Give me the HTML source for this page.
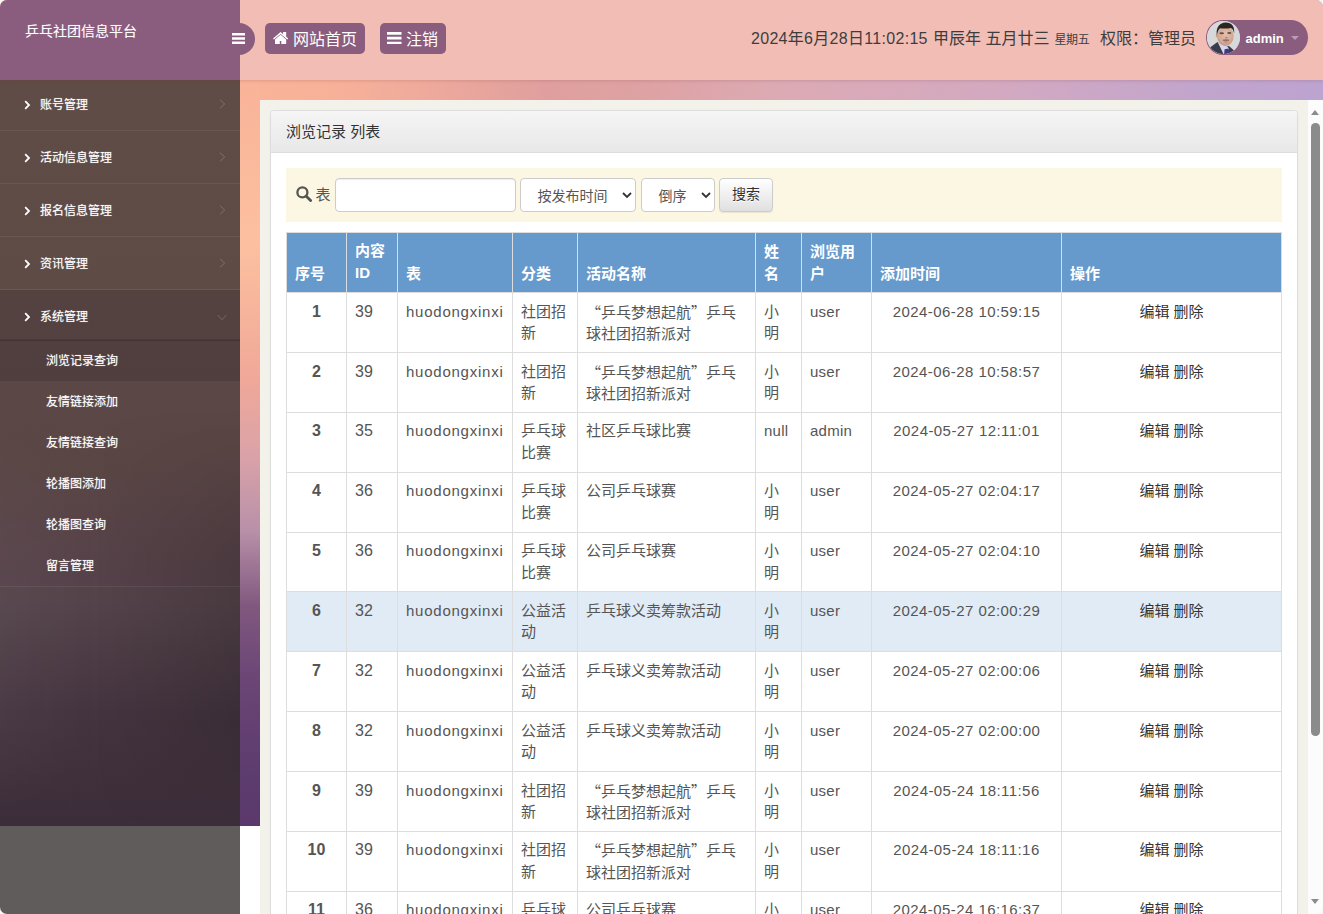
<!DOCTYPE html>
<html lang="zh-CN">
<head>
<meta charset="utf-8">
<title>乒乓社团信息平台</title>
<style>
*{box-sizing:border-box}
html,body{margin:0;padding:0;width:1323px;height:914px;overflow:hidden;background:#f7f7f7}
.win{position:absolute;left:0;top:0;width:1323px;height:914px;overflow:hidden;border-radius:7px;background:#fff}
body{font-family:"Liberation Sans","Noto Sans CJK SC",sans-serif;font-size:15px;color:#333;position:relative}
a{color:inherit;text-decoration:none}
.bg{position:absolute;left:0;top:0;width:1323px;height:826px;background:linear-gradient(90deg,#f9b398 240px,#f7b199 340px,#eca89c 444px,#e09f9e 546px,#dea2a4 650px,#dcaab3 770px,#d3a9c1 1000px,#c2a5cc 1200px,#bda3d1 1323px)}
.bgleft{position:absolute;left:240px;top:80px;width:20px;height:746px;background:linear-gradient(180deg,#f9b398 0%,#fcc0a0 22%,#f0a898 40%,#dba3a8 50%,#b890a8 60.5%,#80587f 70.5%,#6a4575 80.7%,#5c3b6e 94%,#5b396c 100%)}
/* header */
.header{position:absolute;left:0;top:0;width:1323px;height:80px;background:#f2bdb5;box-shadow:0 1px 3px rgba(120,60,60,.2)}
.brand{position:absolute;left:0;top:0;width:240px;height:80px;background:#8a5c7e;color:#fff;font-size:14px;line-height:20px;padding:20.500px 0 0 25px;text-shadow:0 0 1px rgba(255,255,255,.35)}
.toggle{position:absolute;left:223px;top:23px;width:32px;height:32px;border-radius:16px;background:#8a5c7e}
.toggle svg{position:absolute;left:9px;top:10px}
.hbtn{position:absolute;top:23px;height:31px;background:#8a5c7e;color:#fff;border-radius:5px;font-size:16px;line-height:33px;white-space:nowrap}
.hbtn svg{position:absolute}
.hinfo{position:absolute;top:27.5px;font-size:16px;color:#3d3d3d;white-space:nowrap;line-height:22px}
.hinfo small{font-size:12px;letter-spacing:-.4px}
.user{position:absolute;left:1206px;top:20px;width:102px;height:34.5px;border-radius:17.25px;background:#8a5c7e;color:#fff}
.user .av{position:absolute;left:1px;top:.8px;width:33px;height:33px;border-radius:50%;overflow:hidden;background:#d5d7d8}
.user b{position:absolute;left:39.5px;top:10px;font-weight:bold;font-size:13px;line-height:17px}
.user i{position:absolute;left:84.5px;top:16px;width:0;height:0;border:4px solid transparent;border-top:4px solid #b89bb5;border-bottom:0}
/* sidebar */
.side{position:absolute;left:0;top:80px;width:240px;height:834px;background:#605c5b;overflow:hidden}
.sidegrad{position:absolute;left:0;top:0;width:240px;height:746px;background:linear-gradient(180deg,#5f4c46 0%,#5e4b46 30%,#5b4845 50%,#54434a 70%,#44343f 85%,#3c2d3a 100%)}
.mi{position:absolute;left:0;width:240px;height:53px;border-bottom:1px solid rgba(255,255,255,.07);color:#fff;font-size:12px;line-height:54.6px;padding-left:40px;text-shadow:0 0 1px rgba(255,255,255,.6)}
.mi.act{background:rgba(40,30,40,.2);border-bottom:2px solid rgba(40,30,40,.22)}
.mi svg.l{position:absolute;left:24px;top:22px}
.mi svg.r{position:absolute;left:219px;top:20.500px}
.si{position:absolute;left:0;width:240px;height:41px;color:#fff;font-size:12px;line-height:43px;padding-left:46px;text-shadow:0 0 1px rgba(255,255,255,.6)}
.si.act{background:rgba(40,30,40,.22)}
.diag{position:absolute;left:0;top:330px;width:240px;height:416px;background:linear-gradient(90deg,rgba(255,255,255,.03) 0%,rgba(0,0,0,0) 40%,rgba(0,0,0,.13) 100%);-webkit-mask-image:linear-gradient(180deg,transparent 0%,#000 35%,#000 75%,transparent 100%);mask-image:linear-gradient(180deg,transparent 0%,#000 35%,#000 75%,transparent 100%)}
.subbg{position:absolute;left:0;top:260px;width:240px;height:247px;background:rgba(90,60,70,.12);border-bottom:1px solid rgba(255,255,255,.07)}
/* frame */
.frame{position:absolute;left:260px;top:100px;width:1063px;height:814px;background:#f2f1ea;overflow:hidden}
.sb{position:absolute;left:1048px;top:0;width:15px;height:814px;background:#fcfcfc}
.sb .th{position:absolute;left:3.2px;top:22.7px;width:8.6px;height:613px;border-radius:4.3px;background:#8b8b8b}
.sb .up{position:absolute;left:3px;top:10px;width:0;height:0;border:4.5px solid transparent;border-bottom:5px solid #8b8b8b;border-top:0}
.sb .dn{position:absolute;left:3px;top:799px;width:0;height:0;border:4.5px solid transparent;border-top:5px solid #8b8b8b;border-bottom:0}
.panel{position:absolute;left:10px;top:10px;width:1028px;height:900px;background:#fff;border:1px solid #ddd;border-radius:4px;box-shadow:0 1px 2px rgba(0,0,0,.05)}
.ph{position:absolute;left:0;top:0;width:1026px;height:42px;background:linear-gradient(180deg,#f5f5f5,#e8e8e8);border-bottom:1px solid #ddd;border-radius:3px 3px 0 0;font-size:15px;color:#333;padding:10px 15px;line-height:21px}
.search{position:absolute;left:15px;top:57px;width:996px;height:54px;background:#fcf7e3}
.search .lbl{position:absolute;left:29.500px;top:15.500px;font-size:15px;color:#555;line-height:21px}
.search>svg{position:absolute;left:9.500px;top:18px}
.inp{position:absolute;left:49px;top:10px;width:181px;height:34px;border:1px solid #ccc;border-radius:4px;background:#fff;box-shadow:inset 0 1px 1px rgba(0,0,0,.075)}
.sel{position:absolute;top:10px;height:34px;border:1px solid #ccc;border-radius:4px;background:#fff;font-size:14px;color:#555;line-height:35px;padding-left:16.500px}
.sel svg{position:absolute;top:12.500px}
.btn{position:absolute;left:433px;top:10px;width:54px;height:34px;border:1px solid #ccc;border-radius:4px;background:linear-gradient(180deg,#fff,#e0e0e0);font-size:14px;color:#333;line-height:31.500px;text-align:center;box-shadow:inset 0 1px 0 rgba(255,255,255,.15),0 1px 1px rgba(0,0,0,.075);text-shadow:0 1px 0 #fff}
table{position:absolute;left:15px;top:121.3px;width:995px;border-collapse:collapse;table-layout:fixed;font-size:15px;line-height:21.43px;color:#555}
th,td{border:1px solid #ddd;padding:8px;vertical-align:top;text-align:left}
th{background:#6699cc;color:#fff;font-weight:bold;vertical-align:bottom}
.q{font-family:"Noto Sans CJK SC",sans-serif}
td>div{height:42.86px;position:relative;top:-.5px}
th>div{max-height:42.86px}
td.c,td.n{text-align:center}
td.c{letter-spacing:.43px}
td.t{letter-spacing:.76px}
td.d{font-size:16px}
td.u{letter-spacing:.25px}
td.n{font-weight:bold;font-size:16px}
td.o{text-align:center;color:#333}
tr.hl td{background:#e0ebf5}
</style>
</head>
<body>
<div class="win">
<div class="bg"></div>
<div class="bgleft"></div>

<div class="side">
  <div class="sidegrad"></div>
  <div class="subbg"></div>
  <div class="diag"></div>
  <div class="mi" style="top:-2px"><svg class="l" width="7" height="10" viewBox="0 0 7 10"><path d="M1.200 1.200L5 5L1.200 8.800" fill="none" stroke="#fff" stroke-width="1.800"/></svg>账号管理<svg class="r" width="7" height="10" viewBox="0 0 7 10"><path d="M1 .7L5.700 5L1 9.300" fill="none" stroke="rgba(255,255,255,.2)" stroke-width="1"/></svg></div>
  <div class="mi" style="top:51px"><svg class="l" width="7" height="10" viewBox="0 0 7 10"><path d="M1.200 1.200L5 5L1.200 8.800" fill="none" stroke="#fff" stroke-width="1.800"/></svg>活动信息管理<svg class="r" width="7" height="10" viewBox="0 0 7 10"><path d="M1 .7L5.700 5L1 9.300" fill="none" stroke="rgba(255,255,255,.2)" stroke-width="1"/></svg></div>
  <div class="mi" style="top:104px"><svg class="l" width="7" height="10" viewBox="0 0 7 10"><path d="M1.200 1.200L5 5L1.200 8.800" fill="none" stroke="#fff" stroke-width="1.800"/></svg>报名信息管理<svg class="r" width="7" height="10" viewBox="0 0 7 10"><path d="M1 .7L5.700 5L1 9.300" fill="none" stroke="rgba(255,255,255,.2)" stroke-width="1"/></svg></div>
  <div class="mi" style="top:157px"><svg class="l" width="7" height="10" viewBox="0 0 7 10"><path d="M1.200 1.200L5 5L1.200 8.800" fill="none" stroke="#fff" stroke-width="1.800"/></svg>资讯管理<svg class="r" width="7" height="10" viewBox="0 0 7 10"><path d="M1 .7L5.700 5L1 9.300" fill="none" stroke="rgba(255,255,255,.2)" stroke-width="1"/></svg></div>
  <div class="mi act" style="top:210px;height:51px"><svg class="l" width="7" height="10" viewBox="0 0 7 10"><path d="M1.200 1.200L5 5L1.200 8.800" fill="none" stroke="#fff" stroke-width="1.800"/></svg>系统管理<svg class="r" style="left:216.500px;top:23.500px" width="10" height="7" viewBox="0 0 10 7"><path d="M.7 1L5 5.700L9.300 1" fill="none" stroke="rgba(255,255,255,.2)" stroke-width="1"/></svg></div>
  <div class="si act" style="top:260px">浏览记录查询</div>
  <div class="si" style="top:301px">友情链接添加</div>
  <div class="si" style="top:342px">友情链接查询</div>
  <div class="si" style="top:383px">轮播图添加</div>
  <div class="si" style="top:424px">轮播图查询</div>
  <div class="si" style="top:465px">留言管理</div>
</div>

<div class="header">
  <div class="brand">乒乓社团信息平台</div>
  <div class="toggle"><svg width="13" height="11" viewBox="0 0 13 11"><path d="M0 1.3h13M0 5.5h13M0 9.7h13" stroke="#fff" stroke-width="2.4" fill="none"/></svg></div>
  <div class="hbtn" style="left:265px;width:100px;padding-left:28px"><svg style="left:7.9px;top:9px" width="15.2" height="12.3" viewBox="0 0 15.2 12.3"><path d="M7.6 0L0 6.5l.9 1.1L7.6 1.9l6.700 5.700.9-1.100z" fill="#fff"/><path d="M7.6 2.800L2 7.600v4.700h4.800V9h1.500v3.300h4.900V7.600z" fill="#fff"/><path d="M10.100 0h3.100v5l-3.100-2.600z" fill="#fff"/></svg>网站首页</div>
  <div class="hbtn" style="left:380px;width:66px;padding-left:26px"><svg style="left:7px;top:9px" width="14.5" height="12.4" viewBox="0 0 14.5 12.4"><path d="M0 1.4h14.5M0 6.2h14.5M0 11h14.5" stroke="#fff" stroke-width="2.7" fill="none"/></svg>注销</div>
  <div class="hinfo" style="left:751px;letter-spacing:.3px">2024年6月28日11:02:15</div><div class="hinfo" style="left:933px">甲辰年 五月廿三</div><div class="hinfo" style="left:1054.5px"><small>星期五</small></div><div class="hinfo" style="left:1100px">权限：管理员</div>
  <div class="user"><span class="av"><svg width="33" height="33" viewBox="0 0 33 33"><defs><filter id="bl" x="-10%" y="-10%" width="120%" height="120%"><feGaussianBlur stdDeviation=".5"/></filter><filter id="bl2" x="-30%" y="-30%" width="160%" height="160%"><feGaussianBlur stdDeviation=".7"/></filter><radialGradient id="sk" cx=".52" cy=".42" r=".62"><stop offset="0" stop-color="#e3c0ad"/><stop offset=".7" stop-color="#d3aa96"/><stop offset="1" stop-color="#b98f7d"/></radialGradient></defs><rect width="33" height="33" fill="#d6d8d9"/><g filter="url(#bl)"><path d="M3 26.500L10.500 21l6 5 5.500-1 5 4.500V33H3z" fill="#393d4b"/><path d="M10.800 21.200l3.200 1.300 6.500 3.200 1.500 1.800-.5 5.500H16.500z" fill="#d9d6ee"/><path d="M17.600 28.200l4-.6 1 5.400h-5.500z" fill="#43387a"/><ellipse cx="10" cy="14.500" rx="1.200" ry="2" fill="#c9a08c"/><ellipse cx="18.400" cy="14.800" rx="8.300" ry="10.100" fill="url(#sk)"/><path d="M9.800 14c-1-7.500 2.800-12.500 9-12.500 5.700 0 9.100 3.700 8.300 10.700-.5-2.800-1.400-4.600-3.300-5.300-3.600.9-8 .7-10.800.3-1.700 1.400-2.300 4-3.200 6.800z" fill="#2b2523"/></g><g filter="url(#bl2)"><ellipse cx="14.700" cy="12.300" rx="2.300" ry="1" fill="#6b4a40"/><ellipse cx="22.300" cy="12.100" rx="2.100" ry="1" fill="#6b4a40"/><ellipse cx="19.400" cy="16.600" rx="1.400" ry=".9" fill="#b88b79"/><ellipse cx="19" cy="19.300" rx="3.300" ry="1.100" fill="#94716a"/><ellipse cx="19" cy="21" rx="1.800" ry=".5" fill="#b98478"/></g></svg></span><b>admin</b><i></i></div>
</div>

<div class="frame">
  <div class="sb"><i class="up"></i><i class="th"></i><i class="dn"></i></div>
  <div class="panel">
    <div class="ph">浏览记录 列表</div>
    <div class="search">
      <svg width="16" height="16" viewBox="0 0 16 16"><circle cx="6.400" cy="6.400" r="5" fill="none" stroke="#555" stroke-width="2.300"/><path d="M10 10l4.600 4.600" stroke="#555" stroke-width="2.800" stroke-linecap="round"/></svg>
      <span class="lbl">表</span>
      <div class="inp"></div>
      <div class="sel" style="left:234px;width:116px">按发布时间<svg style="left:101px" width="10" height="7" viewBox="0 0 10 7"><path d="M1 1l4 4l4-4" fill="none" stroke="#333" stroke-width="1.8"/></svg></div>
      <div class="sel" style="left:355px;width:74px">倒序<svg style="left:59px" width="10" height="7" viewBox="0 0 10 7"><path d="M1 1l4 4l4-4" fill="none" stroke="#333" stroke-width="1.8"/></svg></div>
      <div class="btn">搜索</div>
    </div>
    <table>
      <colgroup><col style="width:60px"><col style="width:51px"><col style="width:115px"><col style="width:65px"><col style="width:178px"><col style="width:46px"><col style="width:70px"><col style="width:190px"><col style="width:220px"></colgroup>
      <tr><th><div>序号</div></th><th><div style="position:relative;top:-1.200px">内容ID</div></th><th><div>表</div></th><th><div>分类</div></th><th><div>活动名称</div></th><th><div>姓名</div></th><th><div>浏览用户</div></th><th><div>添加时间</div></th><th><div>操作</div></th></tr>
      <tr><td class="n"><div>1</div></td><td class="d"><div>39</div></td><td class="t"><div>huodongxinxi</div></td><td><div>社团招新</div></td><td><div><span class="q">“</span>乒乓梦想起航<span class="q">”</span>乒乓球社团招新派对</div></td><td><div>小明</div></td><td class="u"><div>user</div></td><td class="c"><div>2024-06-28 10:59:15</div></td><td class="o"><div>编辑 删除</div></td></tr>
      <tr><td class="n"><div>2</div></td><td class="d"><div>39</div></td><td class="t"><div>huodongxinxi</div></td><td><div>社团招新</div></td><td><div><span class="q">“</span>乒乓梦想起航<span class="q">”</span>乒乓球社团招新派对</div></td><td><div>小明</div></td><td class="u"><div>user</div></td><td class="c"><div>2024-06-28 10:58:57</div></td><td class="o"><div>编辑 删除</div></td></tr>
      <tr><td class="n"><div>3</div></td><td class="d"><div>35</div></td><td class="t"><div>huodongxinxi</div></td><td><div>乒乓球比赛</div></td><td><div>社区乒乓球比赛</div></td><td class="u"><div>null</div></td><td class="u"><div>admin</div></td><td class="c"><div>2024-05-27 12:11:01</div></td><td class="o"><div>编辑 删除</div></td></tr>
      <tr><td class="n"><div>4</div></td><td class="d"><div>36</div></td><td class="t"><div>huodongxinxi</div></td><td><div>乒乓球比赛</div></td><td><div>公司乒乓球赛</div></td><td><div>小明</div></td><td class="u"><div>user</div></td><td class="c"><div>2024-05-27 02:04:17</div></td><td class="o"><div>编辑 删除</div></td></tr>
      <tr><td class="n"><div>5</div></td><td class="d"><div>36</div></td><td class="t"><div>huodongxinxi</div></td><td><div>乒乓球比赛</div></td><td><div>公司乒乓球赛</div></td><td><div>小明</div></td><td class="u"><div>user</div></td><td class="c"><div>2024-05-27 02:04:10</div></td><td class="o"><div>编辑 删除</div></td></tr>
      <tr class="hl"><td class="n"><div>6</div></td><td class="d"><div>32</div></td><td class="t"><div>huodongxinxi</div></td><td><div>公益活动</div></td><td><div>乒乓球义卖筹款活动</div></td><td><div>小明</div></td><td class="u"><div>user</div></td><td class="c"><div>2024-05-27 02:00:29</div></td><td class="o"><div>编辑 删除</div></td></tr>
      <tr><td class="n"><div>7</div></td><td class="d"><div>32</div></td><td class="t"><div>huodongxinxi</div></td><td><div>公益活动</div></td><td><div>乒乓球义卖筹款活动</div></td><td><div>小明</div></td><td class="u"><div>user</div></td><td class="c"><div>2024-05-27 02:00:06</div></td><td class="o"><div>编辑 删除</div></td></tr>
      <tr><td class="n"><div>8</div></td><td class="d"><div>32</div></td><td class="t"><div>huodongxinxi</div></td><td><div>公益活动</div></td><td><div>乒乓球义卖筹款活动</div></td><td><div>小明</div></td><td class="u"><div>user</div></td><td class="c"><div>2024-05-27 02:00:00</div></td><td class="o"><div>编辑 删除</div></td></tr>
      <tr><td class="n"><div>9</div></td><td class="d"><div>39</div></td><td class="t"><div>huodongxinxi</div></td><td><div>社团招新</div></td><td><div><span class="q">“</span>乒乓梦想起航<span class="q">”</span>乒乓球社团招新派对</div></td><td><div>小明</div></td><td class="u"><div>user</div></td><td class="c"><div>2024-05-24 18:11:56</div></td><td class="o"><div>编辑 删除</div></td></tr>
      <tr><td class="n"><div>10</div></td><td class="d"><div>39</div></td><td class="t"><div>huodongxinxi</div></td><td><div>社团招新</div></td><td><div><span class="q">“</span>乒乓梦想起航<span class="q">”</span>乒乓球社团招新派对</div></td><td><div>小明</div></td><td class="u"><div>user</div></td><td class="c"><div>2024-05-24 18:11:16</div></td><td class="o"><div>编辑 删除</div></td></tr>
      <tr><td class="n"><div>11</div></td><td class="d"><div>36</div></td><td class="t"><div>huodongxinxi</div></td><td><div>乒乓球比赛</div></td><td><div>公司乒乓球赛</div></td><td><div>小明</div></td><td class="u"><div>user</div></td><td class="c"><div>2024-05-24 16:16:37</div></td><td class="o"><div>编辑 删除</div></td></tr>
    </table>
  </div>
</div>
</div>
</body>
</html>
